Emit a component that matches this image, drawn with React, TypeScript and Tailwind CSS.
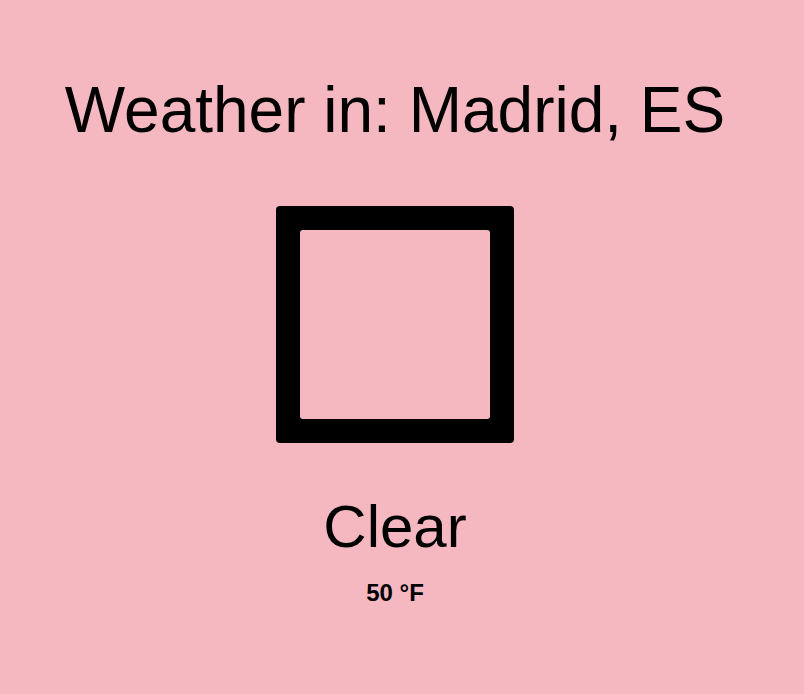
export default function App() {
  return (
    <div className="min-h-[694px] w-full bg-[#F5B8C0] font-['Liberation_Sans',Arial,sans-serif] text-black">
      <div className="mx-auto flex w-[790px] flex-col items-center pt-[78px] ml-0">
        <h1 className="text-[64px] font-normal leading-none">Weather in: Madrid, ES</h1>
        <div className="mt-[64px] h-[237px] w-[238px] rounded-[4px] bg-black p-[24px]">
          <div className="h-full w-full rounded-[3px] bg-[#F5B8C0]" />
        </div>
        <div className="mt-[54px] text-[60px] leading-none">Clear</div>
        <div className="mt-[24px] text-[24px] font-bold leading-none">50 °F</div>
      </div>
    </div>
  );
}
